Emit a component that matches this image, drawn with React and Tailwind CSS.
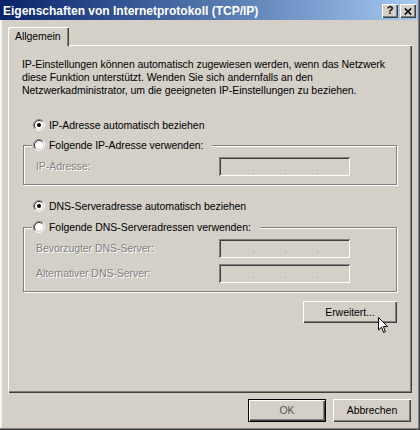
import React from "react";

// classic 3D edges
const raised =
  "shadow-[inset_1px_1px_0_#ffffff,inset_-1px_-1px_0_#404040,inset_-2px_-2px_0_#808080]";
const sunken =
  "shadow-[inset_1px_1px_0_#808080,inset_-1px_-1px_0_#ffffff,inset_2px_2px_0_#404040,inset_-2px_-2px_0_#d4d0c8]";
const disabledText = "text-[#808080] [text-shadow:1px_1px_0_#ffffff]";

function Radio({ checked }) {
  return (
    <svg width="12" height="12" viewBox="0 0 12 12" className="shrink-0">
      <circle cx="6" cy="6" r="4.5" fill="#ffffff" />
      <path d="M2.11 9.89 A5.5 5.5 0 0 1 9.89 2.11" stroke="#808080" fill="none" />
      <path d="M9.89 2.11 A5.5 5.5 0 0 1 2.11 9.89" stroke="#ffffff" fill="none" />
      <path d="M2.82 9.18 A4.5 4.5 0 0 1 9.18 2.82" stroke="#404040" fill="none" />
      <path d="M9.18 2.82 A4.5 4.5 0 0 1 2.82 9.18" stroke="#d4d0c8" fill="none" />
      {checked && <circle cx="6" cy="6" r="2" fill="#000000" />}
    </svg>
  );
}

function RadioRow({ checked, label, className = "" }) {
  return (
    <div className={`flex items-center gap-[4px] h-[14px] ${className}`}>
      <Radio checked={checked} />
      <span>{label}</span>
    </div>
  );
}

// disabled IP field with the three dots
function IpField() {
  return (
    <div className={`w-[131px] h-[19px] bg-[#d4d0c8] ${sunken} flex items-start pt-[13px] pl-[34px] gap-[31px]`}>
      <span className="w-px h-px bg-[#9a9a9a]" />
      <span className="w-px h-px bg-[#9a9a9a]" />
      <span className="w-px h-px bg-[#9a9a9a]" />
    </div>
  );
}

function FieldRow({ label, className = "" }) {
  return (
    <div className={`flex items-center pl-[12px] ${className}`}>
      <span className={`w-[183px] ${disabledText}`}>{label}</span>
      <IpField />
    </div>
  );
}

function GroupBox({ legend, children }) {
  return (
    <div className="border border-[#808080] shadow-[inset_1px_1px_0_#ffffff,1px_1px_0_#ffffff] pb-[8px]">
      <div className="flex">
        <div className="-mt-[8px] ml-[8px] pl-[1px] pr-[9px] bg-[#d4d0c8]">
          <RadioRow checked={false} label={legend} />
        </div>
      </div>
      {children}
    </div>
  );
}

function CaptionButton({ children }) {
  return (
    <div className={`w-[16px] h-[14px] bg-[#d4d0c8] ${raised} flex items-center justify-center`}>
      {children}
    </div>
  );
}

export default function App() {
  return (
    <div className="relative w-[420px] h-[430px] bg-[#d4d0c8] flex flex-col font-['Liberation_Sans',Arial,sans-serif] text-[10.5px] leading-[13px] tracking-[-0.05px] text-black shadow-[inset_-1px_-1px_0_#404040,inset_-2px_-2px_0_#808080,inset_2px_0_0_#f4f4f4]">
      {/* title bar */}
      <div className="h-[20px] mr-[2px] flex items-start bg-gradient-to-r from-[#0a246a] to-[#a6caf0] pl-[3px] pr-[2px]">
        <span className="text-white font-bold text-[12px] leading-[20px] pt-[1px] tracking-normal">
          Eigenschaften von Internetprotokoll (TCP/IP)
        </span>
        <div className="ml-auto flex gap-[2px] pt-[4px]">
          <CaptionButton>
            <span className="font-bold text-[11px] leading-none text-black -mt-px">?</span>
          </CaptionButton>
          <CaptionButton>
            <svg width="8" height="7" viewBox="0 0 8 7">
              <path d="M0.8 0.5 L7.2 6.5 M7.2 0.5 L0.8 6.5" stroke="#000" strokeWidth="1.6" />
            </svg>
          </CaptionButton>
        </div>
      </div>

      <div className="flex flex-col px-[8px] pt-[7px]">
        {/* tab */}
        <div className="flex">
          <div className="relative z-10 w-[61px] h-[19px] pl-[7px] flex items-center bg-[#d4d0c8] rounded-tl-[2px] shadow-[inset_1px_1px_0_#ffffff,inset_-1px_0_0_#404040,inset_-2px_0_0_#808080]">
            Allgemein
          </div>
        </div>

        {/* panel */}
        <div className="-mt-px h-[348px] flex flex-col pl-[15px] pr-[15px] pt-[13px] shadow-[inset_1px_1px_0_#ffffff,inset_-1px_-1px_0_#404040,inset_-2px_-2px_0_#808080]">
          <p className="-ml-px">
            IP-Einstellungen können automatisch zugewiesen werden, wenn das Netzwerk
            <br />
            diese Funktion unterstützt. Wenden Sie sich andernfalls an den
            <br />
            Netzwerkadministrator, um die geeigneten IP-Einstellungen zu beziehen.
          </p>

          <RadioRow checked label="IP-Adresse automatisch beziehen" className="ml-[10px] mt-[21px]" />

          <div className="mt-[13px]">
            <GroupBox legend="Folgende IP-Adresse verwenden:">
              <FieldRow label="IP-Adresse:" className="mt-[5px]" />
            </GroupBox>
          </div>

          <RadioRow checked label="DNS-Serveradresse automatisch beziehen" className="ml-[10px] mt-[14px]" />

          <div className="mt-[14px]">
            <GroupBox legend="Folgende DNS-Serveradressen verwenden:">
              <FieldRow label="Bevorzugter DNS-Server:" className="mt-[5px]" />
              <FieldRow label="Alternativer DNS-Server:" className="mt-[6px]" />
            </GroupBox>
          </div>

          <div className="flex justify-end mt-[9px]">
            <div className={`w-[94px] h-[22px] ${raised} flex items-center justify-center`}>
              Erweitert...
            </div>
          </div>
        </div>

        {/* dialog buttons */}
        <div className="flex justify-end gap-[7px] mt-[6px] pr-px">
          <div className="w-[78px] h-[23px] border border-black">
            <div className={`w-full h-full ${raised} flex items-center justify-center text-[#555555]`}>
              OK
            </div>
          </div>
          <div className={`w-[78px] h-[23px] ${raised} flex items-center justify-center`}>
            Abbrechen
          </div>
        </div>
      </div>

      {/* mouse pointer */}
      <svg className="absolute left-[378px] top-[317px]" width="11" height="17" viewBox="0 0 11 17">
        <path
          d="M0.5 0.5 L0.5 13 L3.5 10.2 L5.6 15.5 L7.4 14.7 L5.4 9.6 L9.5 9.6 Z"
          fill="#ffffff"
          stroke="#000000"
          strokeWidth="1"
          strokeLinejoin="miter"
        />
      </svg>
    </div>
  );
}
